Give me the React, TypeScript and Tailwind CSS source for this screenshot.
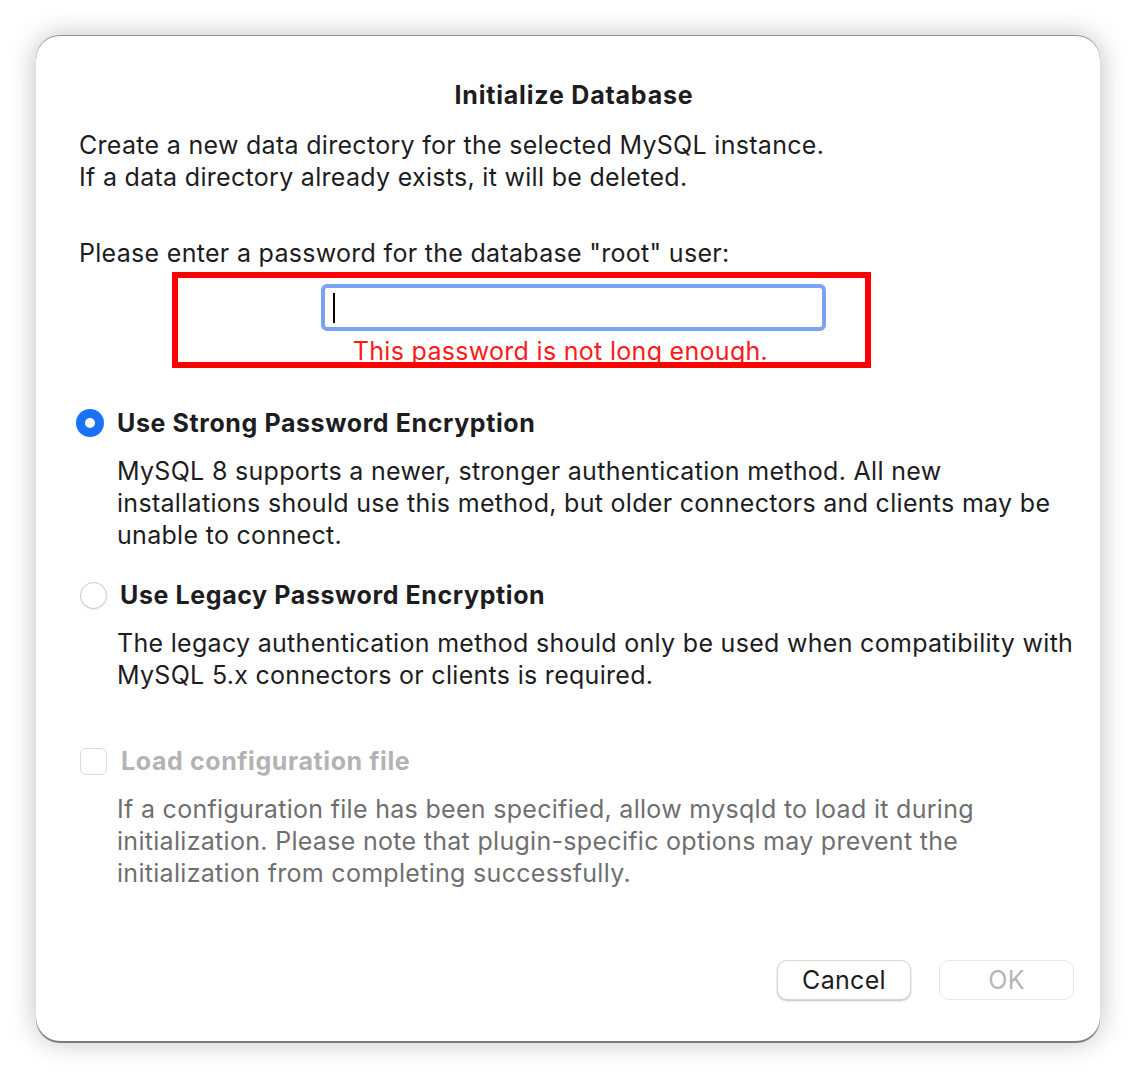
import { useState } from 'react';

const FONT = "font-['Inter','Noto_Sans',sans-serif]";

export default function App() {
  const [mode, setMode] = useState<'strong' | 'legacy'>('strong');
  const [password, setPassword] = useState('');

  return (
    <div className={`min-h-[1080px] w-[1136px] bg-white pt-[36px] pl-[36px] ${FONT}`}>
      <div className="w-[1064px] h-[1005px] rounded-[24px] bg-white shadow-[0_0_28px_rgba(0,0,0,0.26),0_-1px_0_rgba(0,0,0,0.35),0_2px_0_rgba(0,0,0,0.45)] pt-[43px] pl-[43px] pr-[24px] text-[#1d1d1f] text-[25px] leading-[32px] tracking-[0.3px]">
        <h2 className="text-center font-bold text-[25px] leading-[32px] tracking-[0.8px] pr-[7px]">Initialize Database</h2>

        <p className="mt-[18px]">
          Create a new data directory for the selected MySQL instance.
          <br />
          If a data directory already exists, it will be deleted.
        </p>

        <p className="mt-[44px]">Please enter a password for the database "root" user:</p>

        {/* highlighted validation area */}
        <div className="mt-[3px] ml-[93px] w-[699px] h-[96px] border-[6px] border-[#ff0000] overflow-hidden">
          <div className="relative ml-[143px] mt-[6px] w-[505px] h-[47px] rounded-[6px] border-[4px] border-[#7ba2f5] bg-white flex items-center px-[6px]">
            <input
              type="password"
              value={password}
              onChange={e => setPassword(e.target.value)}
              className="w-full h-full outline-none bg-transparent text-[22px] caret-black"
            />
            <span className="absolute left-[8px] top-[5px] w-[2px] h-[30px] bg-black" />
          </div>
          <p className="text-center text-[#ff1a1a] text-[25px] leading-[28px] mt-[6px] pl-[78px]">
            This password is not long enough.
          </p>
        </div>

        <label className="mt-[39px] flex items-center cursor-pointer" onClick={() => setMode('strong')}>
          <span className="ml-[-3px] w-[28px] h-[28px] rounded-full flex items-center justify-center shrink-0 bg-[#1a73f7]">
            {mode === 'strong' && <span className="w-[10px] h-[10px] rounded-full bg-white" />}
          </span>
          <span className="ml-[13px] font-bold tracking-[0.6px]">Use Strong Password Encryption</span>
        </label>
        <p className="mt-[16px] ml-[38px]">
          MySQL 8 supports a newer, stronger authentication method. All new installations should use this
          method, but older connectors and clients may be unable to connect.
        </p>

        <label className="mt-[28px] flex items-center cursor-pointer" onClick={() => setMode('legacy')}>
          <span
            className={`ml-[1px] w-[27px] h-[27px] rounded-full flex items-center justify-center shrink-0 ${
              mode === 'legacy' ? 'bg-[#1a73f7]' : 'bg-white border border-[#c8c8c8] shadow-[0_1px_1px_rgba(0,0,0,0.08)]'
            }`}
          >
            {mode === 'legacy' && <span className="w-[10px] h-[10px] rounded-full bg-white" />}
          </span>
          <span className="ml-[13px] font-bold tracking-[0.6px]">Use Legacy Password Encryption</span>
        </label>
        <p className="mt-[16px] ml-[38px]">
          The legacy authentication method should only be used when compatibility with MySQL 5.x connectors or
          clients is required.
        </p>

        <div className="mt-[54px] flex items-center">
          <span className="ml-[1px] w-[27px] h-[27px] rounded-[6px] border border-[#dcdcdc] bg-white shrink-0" />
          <span className="ml-[14px] font-bold tracking-[0.6px] text-[#b3b3b3]">Load configuration file</span>
        </div>
        <p className="mt-[16px] ml-[38px] text-[#6f6f6f]">
          If a configuration file has been specified, allow mysqld to load it during initialization. Please note
          that plugin-specific options may prevent the initialization from completing successfully.
        </p>

        <div className="mt-[71px] flex justify-end gap-[28px] pr-[2px]">
          <button className="w-[134px] h-[40px] rounded-[10px] bg-white border border-[#d6d6d6] shadow-[0_1px_2px_rgba(0,0,0,0.25)] text-[25px] text-[#1d1d1f]">
            Cancel
          </button>
          <button
            disabled
            className="w-[135px] h-[40px] rounded-[10px] bg-white border border-[#e6e6e6] text-[25px] text-[#b5b5b5]"
          >
            OK
          </button>
        </div>
      </div>
    </div>
  );
}
